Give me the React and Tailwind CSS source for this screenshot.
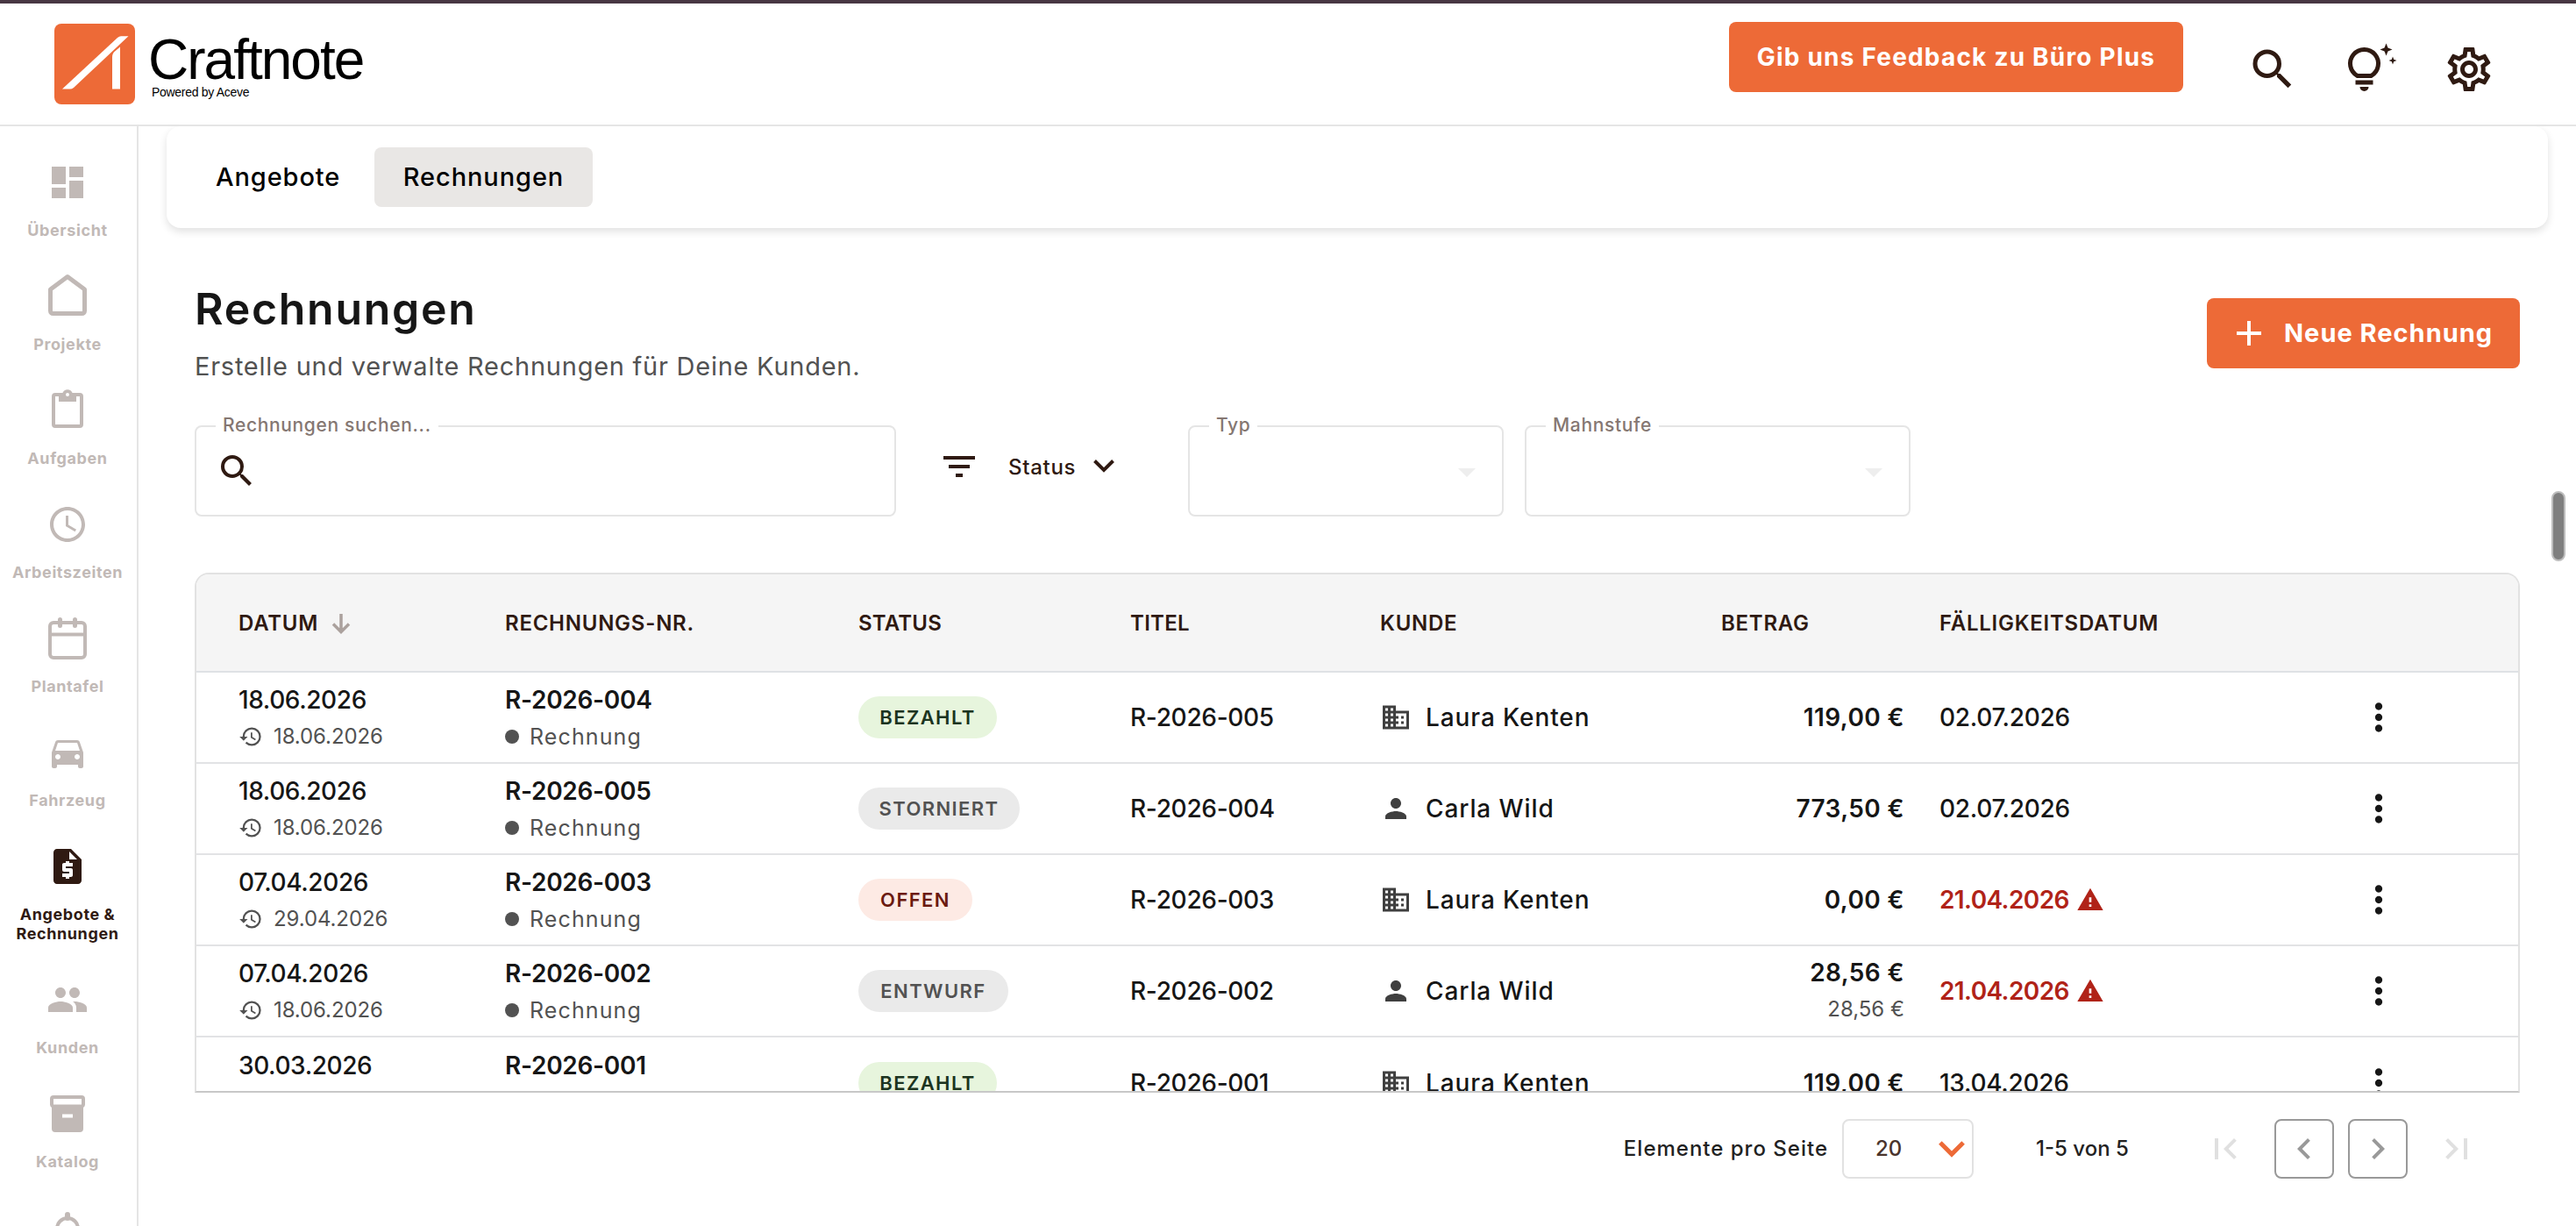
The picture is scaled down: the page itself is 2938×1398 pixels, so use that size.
import { MdDashboard, MdSearch, MdHistory, MdPerson, MdWarning, MdMoreVert, MdAdd, MdFilterList, MdDirectionsCar, MdPeople, MdFirstPage, MdLastPage, MdChevronLeft, MdChevronRight, MdArrowDropDown, MdOutlineBusiness, MdOutlineSettings, MdRequestQuote, MdAccessTime } from 'react-icons/md';

const HouseIcon = () => (
  <svg width="48" height="52" viewBox="0 0 48 52" fill="none" stroke="currentColor" strokeWidth="5" strokeLinejoin="round">
    <path d="M4.500 18 24 3.500 43.500 18v24.500a3 3 0 0 1-3 3h-33a3 3 0 0 1-3-3z" />
  </svg>
);

const ClipboardIcon = () => (
  <svg width="36" height="48" viewBox="0 0 36 48" fill="currentColor">
    <path fillRule="evenodd" d="M32 4h-8.400a6 6 0 0 0-11.200 0H4a4 4 0 0 0-4 4v32a4 4 0 0 0 4 4h28a4 4 0 0 0 4-4V8a4 4 0 0 0-4-4zM18 4a2 2 0 1 1 0 4 2 2 0 0 1 0-4zm14 36H4V8h4v6h20V8h4z" />
  </svg>
);

const CalendarIcon = () => (
  <svg width="44" height="48" viewBox="0 0 44 48" fill="none" stroke="currentColor" strokeWidth="4">
    <rect x="2" y="6" width="40" height="40" rx="4" />
    <path d="M2 19.500h40" />
    <path d="M13.500 2.500v7M30.500 2.500v7" strokeWidth="5" strokeLinecap="round" />
  </svg>
);

const ArchiveIcon = () => (
  <svg width="40" height="42" viewBox="0 0 40 42" fill="currentColor">
    <path fillRule="evenodd" d="M36 0H4a4 4 0 0 0-4 4v6.500A4 4 0 0 0 2 14v24a4 4 0 0 0 4 4h28a4 4 0 0 0 4-4V14a4 4 0 0 0 2-3.500V4a4 4 0 0 0-4-4zM4 4h32v6.500H4zm10 17.500h12v4H14z" />
  </svg>
);

const BellIcon = () => (
  <svg width="40" height="44" viewBox="0 -4 40 44" fill="none" stroke="currentColor" strokeWidth="4">
    <path d="M8 38V19a12 12 0 0 1 24 0v19" />
    <path d="M20 3v4" strokeWidth="6" strokeLinecap="round" />
  </svg>
);

const IdeaIcon = () => (
  <svg width="58" height="58" viewBox="0 0 58 58" fill="currentColor">
    <path d="M12.800 38.500A16 16 0 1 1 28.200 38.500z" fill="none" stroke="currentColor" strokeWidth="5" />
    <path d="M10.500 43.500h20v5h-20zM15.500 51h10a5 5 0 0 1-10 0z" />
    <path d="M45.500 1.500l2 5 5 2-5 2-2 5-2-5-5-2 5-2zM53 16.500l1.200 3.300 3.300 1.200-3.300 1.200L53 25.500l-1.200-3.300-3.300-1.200 3.300-1.200z" />
  </svg>
);

const SortArrow = ({ className }) => (
  <svg className={className} viewBox="0 0 22 24" fill="none" stroke="currentColor" strokeWidth="3.500">
    <path d="M11 1v20M2 12.500l9 9 9-9" />
  </svg>
);

const Chevron = ({ className, stroke = 4 }) => (
  <svg className={className} viewBox="0 0 24 15" fill="none" stroke="currentColor" strokeWidth={stroke}>
    <path d="M1.500 1.500 12 12 22.500 1.500" />
  </svg>
);

const navItems = [
  { label: 'Übersicht', icon: <MdDashboard size={48} /> },
  { label: 'Projekte', icon: <HouseIcon /> },
  { label: 'Aufgaben', icon: <ClipboardIcon /> },
  { label: 'Arbeitszeiten', icon: <MdAccessTime size={48} /> },
  { label: 'Plantafel', icon: <CalendarIcon /> },
  { label: 'Fahrzeug', icon: <MdDirectionsCar size={48} /> },
  { label: 'Angebote & Rechnungen', icon: <MdRequestQuote size={48} />, active: true },
  { label: 'Kunden', icon: <MdPeople size={48} /> },
  { label: 'Katalog', icon: <ArchiveIcon /> },
  { label: '', icon: <BellIcon /> },
];

const invoices = [
  { date: '18.06.2026', changed: '18.06.2026', number: 'R-2026-004', status: 'BEZAHLT', title: 'R-2026-005', customer: 'Laura Kenten', company: true, amount: '119,00 €', due: '02.07.2026' },
  { date: '18.06.2026', changed: '18.06.2026', number: 'R-2026-005', status: 'STORNIERT', title: 'R-2026-004', customer: 'Carla Wild', amount: '773,50 €', due: '02.07.2026' },
  { date: '07.04.2026', changed: '29.04.2026', number: 'R-2026-003', status: 'OFFEN', title: 'R-2026-003', customer: 'Laura Kenten', company: true, amount: '0,00 €', due: '21.04.2026', overdue: true },
  { date: '07.04.2026', changed: '18.06.2026', number: 'R-2026-002', status: 'ENTWURF', title: 'R-2026-002', customer: 'Carla Wild', amount: '28,56 €', open: '28,56 €', due: '21.04.2026', overdue: true },
  { date: '30.03.2026', changed: '30.03.2026', number: 'R-2026-001', status: 'BEZAHLT', title: 'R-2026-001', customer: 'Laura Kenten', company: true, amount: '119,00 €', due: '13.04.2026' },
];

const statusStyles = {
  BEZAHLT: 'bg-[#e7f5dd] text-[#1c3420] w-[158px]',
  STORNIERT: 'bg-[#eaeaea] text-[#525252] w-[184px]',
  OFFEN: 'bg-[#fdeae4] text-[#6b1a10] w-[130px]',
  ENTWURF: 'bg-[#eaeaea] text-[#525252] w-[171px]',
};

const columns = 'grid grid-cols-[304px_403px_310px_285px_389px_249px_1fr_321px] pl-12';

const Header = () => (
  <header className="flex h-[144px] shrink-0 items-start border-t-4 border-b-2 border-t-[#483743] border-b-[#e5e5e5] pl-[62px]">
    <div className="mt-[23px] flex">
      <svg width="92" height="92" viewBox="0 0 92 92">
        <rect width="92" height="92" rx="8" fill="#ed6a37" />
        <path d="M9 74.500 72 16q2-1.700 4-1.700h8.500L22 73q-2 1.500-4 1.500z" fill="#fff" />
        <path d="M66 38q0-4 3-6.500l6-5v48h-9z" fill="#fff" />
      </svg>
      <div className="ml-[15px] font-['Liberation_Sans',sans-serif] text-black">
        <div className="mt-[13px] h-14 whitespace-nowrap text-[64px] leading-[56px] tracking-[-2px]">Craftnote</div>
        <div className="mt-px ml-1 whitespace-nowrap text-[14px] leading-4 tracking-[-0.3px]">Powered by Aceve</div>
      </div>
    </div>
    <button className="mt-[21px] ml-auto h-20 w-[518px] rounded-lg bg-[#ed6a37] text-[28px] font-bold tracking-[1.2px] whitespace-nowrap text-white">
      Gib uns Feedback zu Büro Plus
    </button>
    <div className="flex items-center text-[#2f1a12]">
      <MdSearch className="mt-[45px] ml-[72px] size-[60px]" />
      <div className="mt-10 ml-[54px]"><IdeaIcon /></div>
      <MdOutlineSettings className="mt-[45px] mr-[92px] ml-[52px] size-[60px]" />
    </div>
  </header>
);

const Sidebar = () => (
  <nav className="flex w-[158px] shrink-0 flex-col overflow-hidden border-r-2 border-[#e5e5e5] pt-8 pr-0.5">
    {navItems.map(({ label, icon, active }) => (
      <div key={label} className={`flex shrink-0 flex-col items-center ${active ? 'h-[152px] text-[#2f1a12]' : 'h-[130px] text-[#c1b9b6]'}`}>
        <div className="flex h-16 items-center">{icon}</div>
        <div className="mt-3 w-[134px] text-center text-[18px] leading-[22px] font-bold tracking-[0.6px]">{label}</div>
      </div>
    ))}
  </nav>
);

const OutlinedField = ({ label, className, children }) => (
  <fieldset className={`h-[115px] rounded-lg border-2 border-[#e5e5e5] px-[22px] ${className}`}>
    <legend className="h-6 px-2 text-[21px] leading-[22px] font-medium tracking-[0.65px] text-[#857772]">{label}</legend>
    <div className="flex h-[78px] items-center">{children}</div>
  </fieldset>
);

const Filters = () => (
  <div className="mt-[38px] flex h-[115px]">
    <OutlinedField label="Rechnungen suchen..." className="w-[800px]">
      <MdSearch className="size-12 text-[#2f1a12]" />
    </OutlinedField>
    <div className="ml-12 flex w-[285px] items-center text-[#2f1a12]">
      <MdFilterList className="size-12" />
      <span className="mt-0.5 ml-8 text-[24px] font-medium tracking-[0.7px]">Status</span>
      <Chevron className="ml-5 h-[15px] w-6" />
    </div>
    <OutlinedField label="Typ" className="w-[360px]">
      <MdArrowDropDown className="mt-0.5 -mr-1.5 ml-auto size-12 text-[#eeeeee]" />
    </OutlinedField>
    <OutlinedField label="Mahnstufe" className="ml-6 w-[440px]">
      <MdArrowDropDown className="mt-0.5 -mr-1.5 ml-auto size-12 text-[#eeeeee]" />
    </OutlinedField>
  </div>
);

const InvoiceRow = ({ invoice }) => (
  <div className={`${columns} h-[104px] shrink-0 items-center border-b-2 border-[#e2e3e5] text-[28px] font-medium tracking-[-0.3px] whitespace-nowrap text-[#161616] last:pt-0.5`}>
    <div className="pt-0.5">
      <div className="leading-9 tracking-[-0.4px]">{invoice.date}</div>
      <div className="mt-1.5 flex items-center text-[24px] leading-9 font-normal tracking-[-0.1px] text-[#525252]">
        <MdHistory className="mr-3 size-7" />
        {invoice.changed}
      </div>
    </div>
    <div className="pt-0.5">
      <div className="leading-9 font-semibold">{invoice.number}</div>
      <div className="mt-1.5 flex items-center text-[25px] leading-9 font-normal tracking-[1.1px] text-[#525252]">
        <span className="mr-3 size-4 rounded-full bg-[#525252]" />
        Rechnung
      </div>
    </div>
    <div>
      <span className={`flex h-12 items-center justify-center rounded-full text-[22px] font-semibold tracking-[1.4px] ${statusStyles[invoice.status]}`}>
        {invoice.status}
      </span>
    </div>
    <div>{invoice.title}</div>
    <div className="flex items-center">
      {invoice.company ? <MdOutlineBusiness className="size-9 text-[#3f3f3f]" /> : <MdPerson className="size-9 text-[#3f3f3f]" />}
      <span className="ml-4 tracking-[0.9px]">{invoice.customer}</span>
    </div>
    <div className="pr-10 text-right font-semibold tracking-[0.4px]">
      <div className="leading-9">{invoice.amount}</div>
      {invoice.open && <div className="mt-1.5 text-[24px] leading-9 font-normal tracking-normal text-[#525252]">{invoice.open}</div>}
    </div>
    {invoice.overdue ? (
      <div className="flex items-center font-semibold tracking-[-0.6px] text-[#b02318]">
        {invoice.due}
        <MdWarning className="ml-2 size-8" />
      </div>
    ) : (
      <div>{invoice.due}</div>
    )}
    <MdMoreVert className="ml-[137px] size-[50px]" />
  </div>
);

const InvoiceTable = () => (
  <div className="mt-16 flex h-[593px] w-[2652px] flex-col overflow-hidden rounded-t-2xl border-2 border-[#e2e2e2] border-b-[#c8c8c8]">
    <div className={`${columns} h-28 shrink-0 items-center border-b-2 border-[#dfe1e5] bg-[#f5f5f5] pt-0.5 text-[24px] font-semibold tracking-[0.75px] text-[#2f1a12]`}>
      <div className="flex items-center">
        DATUM
        <SortArrow className="ml-[15px] h-6 w-[22px] text-[#aba19d]" />
      </div>
      <div>RECHNUNGS-NR.</div>
      <div className="tracking-[0.2px]">STATUS</div>
      <div className="tracking-[0.3px]">TITEL</div>
      <div>KUNDE</div>
      <div>BETRAG</div>
      <div>FÄLLIGKEITSDATUM</div>
    </div>
    {invoices.map((invoice) => (
      <InvoiceRow key={invoice.number} invoice={invoice} />
    ))}
  </div>
);

const Pagination = () => (
  <div className="mt-[30px] flex h-[68px] w-[2652px] items-center justify-end pr-12 text-[24px] font-medium whitespace-nowrap text-[#222222]">
    <span className="tracking-[1px]">Elemente pro Seite</span>
    <div className="ml-4 flex h-[68px] w-[150px] items-center rounded-lg border-2 border-[#e2e2e2] pl-9 text-[#4a342c]">
      20
      <Chevron className="mr-2 ml-auto h-[19px] w-[30px] text-[#ed6a37]" />
    </div>
    <span className="ml-[71px] w-[104px]">1-5 von 5</span>
    <MdFirstPage className="ml-[88px] size-12 text-[#e0e0e0]" />
    <button className="ml-8 flex size-[68px] items-center justify-center rounded-lg border-2 border-[#999999] text-[#999999]">
      <MdChevronLeft className="size-12" />
    </button>
    <button className="ml-4 flex size-[68px] items-center justify-center rounded-lg border-2 border-[#999999] text-[#999999]">
      <MdChevronRight className="size-12" />
    </button>
    <MdLastPage className="ml-8 size-12 text-[#e0e0e0]" />
  </div>
);

export default function App() {
  return (
    <div className="flex h-[1398px] w-[2938px] flex-col overflow-hidden bg-white font-[Inter,sans-serif]">
      <Header />
      <div className="flex min-h-0 flex-1">
        <Sidebar />
        <main className="relative min-w-0 flex-1 overflow-hidden pl-8">
          <div className="flex h-[116px] w-[2716px] items-center rounded-2xl pl-[22px] text-[29px] font-medium tracking-[0.9px] shadow-[0_4px_10px_rgba(0,0,0,0.12)]">
            <button className="h-[68px] w-[215px] pl-[34px] text-left">Angebote</button>
            <button className="h-[68px] w-[249px] rounded-lg bg-[#e9e7e5]">Rechnungen</button>
          </div>
          <div className="pl-8">
            <div className="mt-[60px] flex w-[2652px] justify-between">
              <div>
                <h1 className="text-[50px] leading-[64px] font-semibold tracking-[1.7px] text-[#161616]">Rechnungen</h1>
                <p className="mt-4 text-[29px] leading-9 tracking-[0.75px] text-[#525252]">Erstelle und verwalte Rechnungen für Deine Kunden.</p>
              </div>
              <button className="mt-5 flex h-20 w-[357px] items-center rounded-lg bg-[#ed6a37] pl-6 text-[29px] font-bold tracking-[1px] whitespace-nowrap text-white">
                <MdAdd className="mr-4 size-12 shrink-0" />
                Neue Rechnung
              </button>
            </div>
            <Filters />
            <InvoiceTable />
            <Pagination />
          </div>
          <div className="absolute top-[416px] right-3 h-20 w-4 rounded-full border-2 border-[#bdbdbd] bg-[#7f7f7f]" />
        </main>
      </div>
    </div>
  );
}
